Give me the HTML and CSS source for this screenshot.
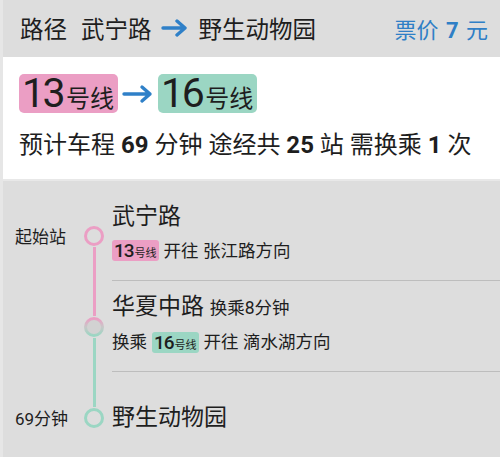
FILE: index.html
```html
<!DOCTYPE html>
<html lang="zh-CN">
<head>
  <meta charset="UTF-8">
  <meta name="viewport" content="width=device-width, initial-scale=1.0">
  <title>路径</title>
  <link rel="stylesheet" href="styles.css">
</head>
<body>
  <div class="screen">
    <div class="header">
      <div class="route">
        <span>路径</span>
        <span class="from">武宁路</span>
        <svg class="arrow" width="28" height="18" viewBox="0 0 28 18"><path d="M2 9H24M16 2L24 9L16 16" fill="none" stroke="#2f80c8" stroke-width="3.4" stroke-linecap="round" stroke-linejoin="round"/></svg>
        <span>野生动物园</span>
      </div>
      <div class="fare">票价 <b>7</b> 元</div>
    </div>

    <div class="card">
      <div class="lines">
        <div class="badge pink"><span class="num">13</span><span class="unit">号线</span></div>
        <svg class="arrow" width="32" height="20" viewBox="0 0 32 20"><path d="M2 10H28M20 3L28 10L20 17" fill="none" stroke="#2f80c8" stroke-width="3.4" stroke-linecap="round" stroke-linejoin="round"/></svg>
        <div class="badge green"><span class="num">16</span><span class="unit">号线</span></div>
      </div>
      <div class="summary">预计车程 <b>69</b> 分钟 途经共 <b>25</b> 站 需换乘 <b>1</b> 次</div>
    </div>

    <div class="timeline">
      <div class="row first">
        <div class="label">起始站</div>
        <div class="rail">
          <div class="seg"></div>
          <svg width="22" height="22" viewBox="0 0 22 22"><circle cx="11" cy="11" r="8.5" fill="none" stroke="#eb9ec4" stroke-width="3"/></svg>
          <div class="seg pink"></div>
        </div>
        <div class="body">
          <div class="name">武宁路</div>
          <div class="sub"><span class="tag pink"><span class="num">13</span><span class="unit">号线</span></span> 开往 张江路方向</div>
        </div>
      </div>

      <div class="row">
        <div class="label"></div>
        <div class="rail">
          <div class="seg pink"></div>
          <svg width="22" height="22" viewBox="0 0 22 22">
            <defs>
              <linearGradient id="mix" x1="0" y1="0" x2="0" y2="1">
                <stop offset="0" stop-color="#eb9ec4"/>
                <stop offset="0.5" stop-color="#c8c8c8"/>
                <stop offset="1" stop-color="#9bd6c3"/>
              </linearGradient>
            </defs>
            <circle cx="11" cy="11" r="8.5" fill="#d2d2d2" stroke="url(#mix)" stroke-width="3"/>
          </svg>
          <div class="seg green"></div>
        </div>
        <div class="body">
          <div class="name">华夏中路 <small>换乘8分钟</small></div>
          <div class="sub">换乘 <span class="tag green"><span class="num">16</span><span class="unit">号线</span></span> 开往 滴水湖方向</div>
        </div>
      </div>

      <div class="row last">
        <div class="label">69分钟</div>
        <div class="rail">
          <div class="seg green"></div>
          <svg width="22" height="22" viewBox="0 0 22 22"><circle cx="11" cy="11" r="8.5" fill="none" stroke="#9bd6c3" stroke-width="3"/></svg>
          <div class="seg"></div>
        </div>
        <div class="body">
          <div class="name">野生动物园</div>
        </div>
      </div>
    </div>
  </div>
</body>
</html>
```

FILE: styles.css
```css
:root {
  --bg: #dddddd;
  --text: #1e1e1e;
  --blue: #2f7fc6;
  --pink: #eb9ec4;
  --green: #9bd6c3;
  --divider: #bdbdbd;
  --font: "Roboto", "Noto Sans CJK SC", sans-serif;
}

* {
  margin: 0;
  padding: 0;
  box-sizing: border-box;
}

body {
  font-family: var(--font);
  color: var(--text);
  background: var(--bg);
  width: 500px;
  height: 457px;
  overflow: hidden;
}

.screen {
  border-left: 3px solid #e6e6e6;
  height: 100%;
}

.header {
  height: 57px;
  display: flex;
  justify-content: space-between;
  align-items: center;
  padding: 0 12px 2px 17px;
}

.route {
  display: flex;
  align-items: center;
  font-size: 23.5px;
}

.route .from {
  margin-left: 14px;
}

.route .arrow {
  margin: 0 10px 0 9px;
}

.fare {
  color: var(--blue);
  font-size: 22px;
}

.fare b {
  font-weight: 700;
  margin: 0 2px;
}

.card {
  background: #ffffff;
  padding: 17px 0 0 16px;
  height: 124px;
  border-bottom: 2px solid #e8e8e8;
}

.lines {
  display: flex;
  align-items: center;
  gap: 4px;
}

.badge {
  display: flex;
  align-items: baseline;
  height: 39px;
  padding: 0 4px 0 3px;
  border-radius: 5px;
  line-height: 39px;
}

.badge .num {
  font-size: 41px;
  letter-spacing: -2.5px;
  margin-right: 3px;
}

.badge .unit {
  font-size: 24px;
}

.pink {
  background: var(--pink);
}

.green {
  background: var(--green);
}

.summary {
  font-size: 24px;
  margin-top: 16px;
  line-height: 32px;
}

.summary b {
  font-weight: 700;
}

.timeline {
  padding-top: 9px;
}

.row {
  display: flex;
  height: 91px;
}

.label {
  width: 80px;
  padding-left: 12px;
  font-size: 17px;
  align-self: center;
}

.rail {
  width: 22px;
  display: flex;
  flex-direction: column;
  align-items: center;
  margin-right: 7px;
}

.rail svg {
  flex-shrink: 0;
}

.seg {
  flex: 1;
  width: 3px;
}

.body {
  flex: 1;
  border-bottom: 1px solid var(--divider);
  display: flex;
  flex-direction: column;
  justify-content: center;
  gap: 7px;
  padding-bottom: 6px;
}

.row.last .body {
  border-bottom: none;
  padding-bottom: 0;
}

.name {
  font-size: 23px;
  line-height: 30px;
}

.name small {
  font-size: 17.5px;
}

.sub {
  font-size: 17.5px;
  line-height: 24px;
  display: flex;
  align-items: center;
  gap: 5px;
}

.tag {
  display: inline-flex;
  align-items: baseline;
  height: 21px;
  line-height: 21px;
  padding: 0 2px;
  border-radius: 3px;
}

.tag .num {
  font-size: 19px;
  font-weight: 500;
  letter-spacing: -1px;
  margin-right: 1px;
}

.tag .unit {
  font-size: 11px;
}
```
